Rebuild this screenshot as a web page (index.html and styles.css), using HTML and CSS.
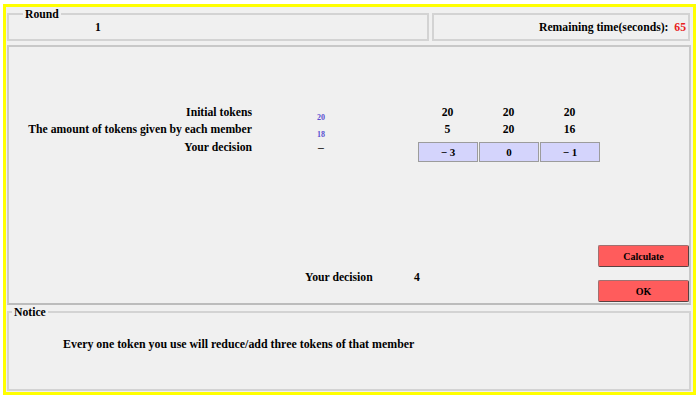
FILE: index.html
```html
<!DOCTYPE html>
<html lang="en">
<head>
    <meta charset="UTF-8">
    <title>Round 1</title>
    <link rel="stylesheet" href="styles.css">
</head>
<body>
    <div class="frame">
        <div class="top-row">
            <div class="panel round-panel">
                <span class="panel-title">Round</span>
                <span class="round-no">1</span>
            </div>
            <div class="panel time-panel">
                Remaining time(seconds):&nbsp;&nbsp;<span class="time-left">65</span>
            </div>
        </div>

        <div class="panel main-panel">
            <div class="token-grid">
                <div class="label">Initial tokens</div>
                <div class="own">20</div>
                <div class="num">20</div>
                <div class="num">20</div>
                <div class="num">20</div>

                <div class="label">The amount of tokens given by each member</div>
                <div class="own">18</div>
                <div class="num">5</div>
                <div class="num">20</div>
                <div class="num">16</div>

                <div class="label label-decision">Your decision</div>
                <div class="own own-dash">–</div>
                <div class="choice">− 3</div>
                <div class="choice">0</div>
                <div class="choice">− 1</div>
            </div>

            <div class="bottom">
                <div class="summary">
                    <span class="summary-label">Your decision</span>
                    <span>4</span>
                </div>
                <div class="actions">
                    <button type="button" class="btn">Calculate</button>
                    <button type="button" class="btn">OK</button>
                </div>
            </div>
        </div>

        <div class="panel notice-panel">
            <span class="panel-title notice-title">Notice</span>
            <p class="notice-text">Every one token you use will reduce/add three tokens of that member</p>
        </div>
    </div>
</body>
</html>
```

FILE: styles.css
```css
body {
    margin: 0;
    background-color: #fff;
    font-family: 'Liberation Serif', 'Times New Roman', serif;
    font-weight: bold;
    font-size: 11.7px;
    color: #000;
}

.frame {
    margin: 4px 0 0 3px;
    width: 693px;
    height: 391px;
    box-sizing: border-box;
    border: 3px solid #ffff00;
    background-color: #f0f0f0;
    padding: 6px 2px 0 1px;
    display: flex;
    flex-direction: column;
}

.panel {
    position: relative;
    box-sizing: border-box;
    border: 2px solid #d3d3d3;
}

.panel-title {
    position: absolute;
    top: -7px;
    left: 14px;
    padding: 0 2px;
    line-height: 14px;
    background-color: #f0f0f0;
}

.notice-title {
    left: 3px;
}

.top-row {
    display: grid;
    grid-template-columns: 422px 258px;
    gap: 3px;
    height: 28px;
}

.round-panel {
    display: flex;
    align-items: center;
    padding-left: 86px;
}

.time-panel {
    display: flex;
    align-items: center;
    justify-content: flex-end;
    padding-right: 2px;
}

.time-left {
    color: #e82020;
}

/* Main area */
.main-panel {
    margin-top: 4px;
    height: 260px;
    border-color: #c8c8c8;
    border-bottom-color: #bcbcbc;
    display: flex;
    flex-direction: column;
    padding-top: 57px;
}

.token-grid {
    display: grid;
    grid-template-columns: 243px 165px 61px 61px 61px;
    grid-template-rows: 17px 17px 24px;
}

.label {
    text-align: right;
    line-height: 17px;
}

.label-decision {
    padding-top: 2px;
    line-height: 16px;
}

.own {
    padding: 9px 0 0 65px;
    font-size: 8px;
    line-height: 9px;
    color: #5a50d0;
}

.own-dash {
    padding: 2px 0 0 66px;
    font-size: 11.7px;
    line-height: 16px;
    color: #333;
}

.num {
    text-align: center;
    line-height: 17px;
}

.choice {
    margin: 4px 0 0 1px;
    width: 60px;
    height: 20px;
    box-sizing: border-box;
    border: 1px solid #9c9c9c;
    background-color: #d4d4fc;
    font-size: 11px;
    line-height: 18px;
    text-align: center;
}

.bottom {
    margin-top: auto;
    display: flex;
    align-items: flex-end;
    padding: 0 0 1px 296px;
}

.summary {
    display: flex;
    margin-right: auto;
    padding-bottom: 17px;
    line-height: 14px;
}

.summary-label {
    width: 109px;
}

.actions {
    display: flex;
    flex-direction: column;
    gap: 13px;
    width: 91px;
}

.btn {
    height: 22px;
    padding: 0;
    border: 1px solid #a07070;
    border-right-color: #5a4040;
    border-bottom-color: #5a4040;
    border-radius: 2px;
    background-color: #ff5c5c;
    font-family: 'Liberation Serif', 'Times New Roman', serif;
    font-weight: bold;
    font-size: 10px;
    color: #000;
}

/* Notice */
.notice-panel {
    margin-top: 6px;
    height: 80px;
    padding: 24px 0 0 54px;
}

.notice-text {
    margin: 0;
    font-size: 11.9px;
    line-height: 14px;
}
```
